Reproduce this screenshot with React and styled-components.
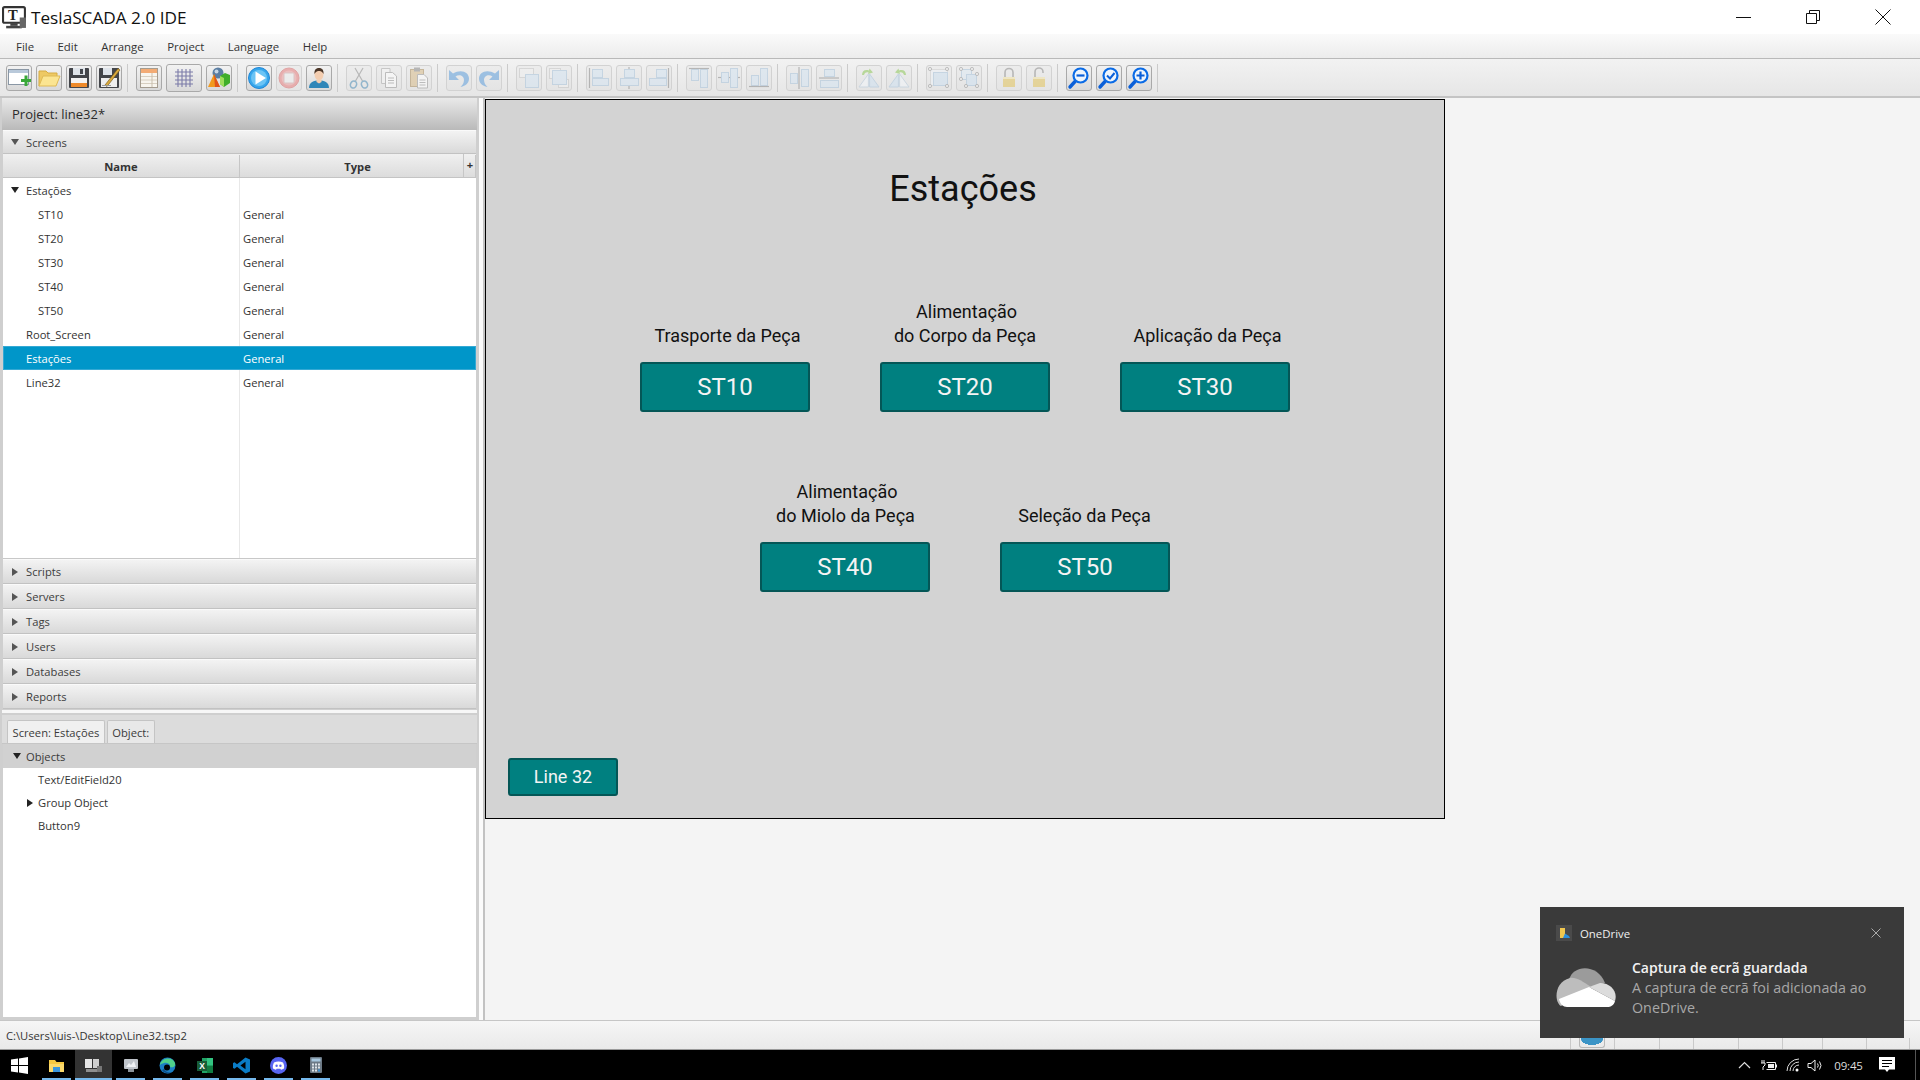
import React from "react";
import styled, { createGlobalStyle } from "styled-components";

const UI_FONT = `"Open Sans", "Noto Sans", sans-serif`;

const GlobalStyle = createGlobalStyle`
  html, body { margin: 0; padding: 0; background: #f4f4f4; }
  * { box-sizing: border-box; }
  body { font-family: ${UI_FONT}; font-size: 11.2px; color: #333; }
`;

const Page = styled.div`
  position: relative;
  width: 1920px;
  height: 1080px;
  overflow: hidden;
  display: flex;
  flex-direction: column;
`;

/* window chrome */
const TitleBar = styled.div`
  height: 34px;
  background: #fff;
  display: flex;
  align-items: center;
  padding: 0 2px;
  flex: none;
`;
const AppTitle = styled.div`
  margin-left: 4px;
  font-size: 17.2px;
  color: #111;
  flex: 1;
`;
const WinButton = styled.div`
  width: 70px;
  height: 34px;
  display: flex;
  align-items: center;
  justify-content: center;
`;
const MenuBar = styled.div`
  height: 24px;
  flex: none;
  display: flex;
  align-items: center;
  padding-left: 16px;
  gap: 23.5px;
  background: linear-gradient(#fafafa, #ececec);
  color: #333;
  font-size: 11.4px;
`;
const Toolbar = styled.div`
  height: 40px;
  flex: none;
  display: flex;
  align-items: center;
  padding: 0 0 0 6px;
  gap: 4px;
  background: linear-gradient(#f2f2f2, #e6e6e6);
  border-top: 1px solid #b9b9b9;
  border-bottom: 2px solid #c4c4c4;
`;
const ToolButton = styled.div`
  width: ${(p) => (p.$wide ? 36 : 26)}px;
  height: ${(p) => (p.$wide ? 28 : 26)}px;
  flex: none;
  border-radius: 3px;
  border: 1px solid ${(p) => (p.$off ? "#d2d2d2" : "#a9a9a9")};
  background: ${(p) => (p.$off ? "linear-gradient(#ececec, #e4e4e4)" : "linear-gradient(#f2f2f2, #d9d9d9)")};
  display: flex;
  align-items: center;
  justify-content: center;
  & > svg { opacity: ${(p) => (p.$off ? 0.55 : 1)}; }
`;
const ToolSep = styled.div`
  width: 1px;
  height: 28px;
  flex: none;
  background: #cbcbcb;
  margin: 0 4px 0 1px;
`;

/* main split */
const Main = styled.div`
  flex: 1;
  min-height: 0;
  display: flex;
  background: #f4f4f4;
`;
const Side = styled.div`
  width: 479px;
  flex: none;
  display: flex;
  flex-direction: column;
  background: #cfcfcf;
  padding: 0 3px 3px 3px;
`;
const Gutter = styled.div`
  width: 6px;
  flex: none;
  background: #fbfbfb;
  border-right: 2px solid #c2c2c2;
`;
const ProjectHeader = styled.div`
  height: 32px;
  flex: none;
  margin: 0 -1px;
  padding-left: 10px;
  display: flex;
  align-items: center;
  font-size: 13px;
  color: #2b2b2b;
  background: linear-gradient(#e9e9e9, #b9b9b9);
`;
const PaneTitle = styled.div`
  height: ${(p) => (p.$h ? p.$h : 25)}px;
  flex: none;
  display: flex;
  align-items: center;
  padding-left: 9px;
  gap: 8px;
  color: #3c3c3c;
  background: linear-gradient(#f3f3f3, #d9d9d9);
  border-top: 1px solid #fafafa;
  border-bottom: 1px solid #c2c2c2;
`;
const Arrow = styled.span`
  width: 0;
  height: 0;
  flex: none;
  display: inline-block;
  ${(p) =>
    p.$open
      ? `margin: 0 -1px; border-left: 4.5px solid transparent; border-right: 4.5px solid transparent; border-top: 6px solid ${p.$dark ? "#222" : "#555"};`
      : `border-top: 4.5px solid transparent; border-bottom: 4.5px solid transparent; border-left: 6px solid ${p.$dark ? "#222" : "#555"};`}
`;
const ColumnHeader = styled.div`
  position: relative;
  height: 24px;
  flex: none;
  display: grid;
  grid-template-columns: 237px 1fr;
  padding-top: 1px;
  font-weight: 700;
  color: #333;
  background: linear-gradient(#f0f0f0, #dcdcdc);
  border-bottom: 1px solid #c4c4c4;
`;
const HeaderCell = styled.div`
  display: flex;
  align-items: center;
  justify-content: center;
  border-right: 1px solid #c6c6c6;
  &:last-child { border-right: 0; }
`;
const HeaderPlus = styled.div`
  position: absolute;
  right: 0;
  top: 0;
  bottom: 0;
  width: 13px;
  display: flex;
  align-items: center;
  justify-content: center;
  border-left: 1px solid #c6c6c6;
  padding-bottom: 2px;
`;
const TreeTable = styled.div`
  height: 381px;
  flex: none;
  background: linear-gradient(to right, #fff 236px, #e8e8e8 236px, #e8e8e8 237px, #fff 237px);
  border-bottom: 1px solid #c8c8c8;
`;
const TreeRow = styled.div`
  height: 24px;
  display: grid;
  grid-template-columns: 236px 1fr;
  align-items: center;
  color: ${(p) => (p.$selected ? "#fff" : "#333")};
  background: ${(p) => (p.$selected ? "#0096c9" : "transparent")};
  ${(p) => p.$selected && "box-shadow: inset 0 0 0 1px #35a9d4;"}
`;
const NameCell = styled.div`
  display: flex;
  align-items: center;
  padding-left: ${(p) => p.$indent}px;
  gap: 8px;
`;
const TypeCell = styled.div`
  padding-left: 4px;
`;
const SplitLine = styled.div`
  height: 6px;
  flex: none;
  margin: 0 -1px;
  background: linear-gradient(#cfcfcf 0 1px, #f7f7f7 1px 4px, #cfcfcf 4px);
`;
const TabStrip = styled.div`
  height: 29px;
  flex: none;
  display: flex;
  align-items: flex-end;
  gap: 2px;
  padding-left: 5px;
  margin: 0 -1px;
  background: #dcdcdc;
  border-bottom: 1px solid #c6c6c6;
`;
const Tab = styled.div`
  height: 23px;
  padding: 0 4.5px;
  display: flex;
  align-items: center;
  border: 1px solid #c4c4c4;
  border-bottom: 0;
  border-radius: 2px 2px 0 0;
  background: ${(p) => (p.$active ? "#f0f0f0" : "#e8e8e8")};
  color: #3a3a3a;
`;
const ObjectsHeader = styled.div`
  height: 24px;
  flex: none;
  display: flex;
  align-items: center;
  gap: 6px;
  padding-left: 11px;
  color: #3a3a3a;
  background: #d1d1d1;
`;
const ObjectList = styled.div`
  flex: 1;
  background: #fff;
`;
const ObjectRow = styled.div`
  height: 23px;
  display: flex;
  align-items: center;
  padding-left: ${(p) => (p.$branch ? 24 : 35)}px;
  gap: 5px;
`;

/* drawing area */
const Workspace = styled.div`
  flex: 1;
  min-width: 0;
  padding-top: 1px;
`;
const Canvas = styled.div`
  position: relative;
  width: 960px;
  height: 720px;
  border: 1px solid #000;
  background: #d3d3d3;
  font-family: Roboto, sans-serif;
  color: #111;
`;
const ScreenTitle = styled.div`
  position: absolute;
  left: 477px;
  top: 67px;
  transform: translateX(-50%);
  font-size: 36px;
  line-height: 44px;
  white-space: nowrap;
  color: #111;
`;
const Caption = styled.div`
  position: absolute;
  left: ${(p) => p.$x}px;
  top: ${(p) => p.$y}px;
  transform: translateX(-50%);
  text-align: center;
  font-size: 18px;
  line-height: 24px;
  white-space: nowrap;
  & > div:nth-child(2) { padding-right: 3px; }
`;
const StationButton = styled.div`
  position: absolute;
  left: ${(p) => p.$x}px;
  top: ${(p) => p.$y}px;
  width: ${(p) => p.$w}px;
  height: ${(p) => p.$h}px;
  padding-bottom: ${(p) => p.$lift || 0}px;
  display: flex;
  align-items: center;
  justify-content: center;
  background: #008080;
  color: #f4f4f4;
  border: 2px solid #045656;
  border-radius: 3px;
  font-size: ${(p) => p.$fs}px;
`;

/* status bar */
const StatusBar = styled.div`
  height: 30px;
  flex: none;
  display: flex;
  align-items: center;
  padding-left: 6px;
  background: linear-gradient(#f6f6f6, #e9e9e9);
  border-top: 1px solid #c6c6c6;
  color: #333;
  border-bottom: 1px solid #9a9a9a;
`;
const StatusPath = styled.div`
  flex: 1;
`;
const StatusCells = styled.div`
  display: flex;
  height: 100%;
  align-items: flex-end;
  padding-right: 10px;
`;
const StatusCell = styled.div`
  width: ${(p) => p.$w}px;
  height: 11px;
  border-left: 1px solid #c9c9c9;
`;
const StatusUser = styled.div`
  width: 26px;
  height: 11px;
  margin: 0 9px 1px 0;
  border: 1px solid #b9b9b9;
  border-top: 0;
  border-radius: 0 0 3px 3px;
  background: radial-gradient(ellipse 11px 6px at 50% 2px, #3b94c6 98%, transparent);
`;

/* taskbar */
const Taskbar = styled.div`
  height: 30px;
  flex: none;
  display: flex;
  align-items: center;
  background: #000;
  color: #e6e6e6;
`;
const StartSlot = styled.div`
  width: 38px;
  height: 30px;
  display: flex;
  align-items: center;
  justify-content: center;
`;
const TaskSlot = styled.div`
  position: relative;
  width: 37px;
  height: 30px;
  flex: none;
  display: flex;
  align-items: center;
  justify-content: center;
  background: ${(p) => (p.$active ? "#333" : "transparent")};
  &::after {
    content: "";
    position: absolute;
    bottom: 0;
    left: ${(p) => (p.$active ? 0 : 4)}px;
    right: ${(p) => (p.$active ? 0 : 4)}px;
    height: 2px;
    background: #76b9ed;
  }
`;
const Tray = styled.div`
  margin-left: auto;
  display: flex;
  align-items: center;
  height: 30px;
`;
const TrayIcon = styled.div`
  width: ${(p) => p.$w}px;
  display: flex;
  align-items: center;
  justify-content: center;
`;
const Clock = styled.div`
  width: 47px;
  text-align: center;
  font-size: 11.5px;
  letter-spacing: -0.2px;
  color: #ddd;
`;
const ShowDesktop = styled.div`
  width: 1px;
  height: 30px;
  margin: 0 4px 0 13px;
  background: #555;
`;

/* toast */
const Toast = styled.div`
  position: absolute;
  left: 1540px;
  top: 907px;
  width: 364px;
  height: 131px;
  padding: 18px 16px 0 16px;
  background: #3a3a3a;
  color: #fff;
`;
const ToastHead = styled.div`
  display: flex;
  align-items: center;
  height: 16px;
  font-size: 11.4px;
  gap: 8px;
  color: #f0f0f0;
`;
const ToastClose = styled.div`
  margin-left: auto;
  margin-right: 7px;
  display: flex;
`;
const ToastBody = styled.div`
  display: flex;
  gap: 16px;
  margin-top: 17px;
`;
const ToastCloud = styled.div`
  padding-top: 10px;
  flex: none;
`;
const ToastTitle = styled.div`
  font-size: 14px;
  line-height: 20px;
  font-weight: 600;
  color: #f2f2f2;
`;
const ToastText = styled.div`
  font-size: 14.3px;
  line-height: 20px;
  color: #a8a8a8;
  width: 250px;
`;

/* icons */
const Svg = ({ w = 24, h = 24, vb, children }) => (
  <svg width={w} height={h} viewBox={vb || `0 0 ${w} ${h}`}>
    {children}
  </svg>
);

const BLUE = { fill: "#d5e5f3", stroke: "#a9c4dc" };
const PALE = { fill: "#f1f1f1", stroke: "#c6c6c6" };
const Box = ({ b, k = BLUE }) => <rect x={b[0] + 0.5} y={b[1] + 0.5} width={b[2] - b[0]} height={b[3] - b[1]} fill={k.fill} stroke={k.stroke} />;
const Rule = ({ d }) => <path d={d} stroke="#8a8a8a" strokeWidth="1.2" fill="none" />;

const Boxes = ({ back, front, rule }) => (
  <Svg>
    <g transform="translate(-1 -1)">
      {back && <Box b={back} k={PALE} />}
      <Box b={front} />
      {rule && <Rule d={rule} />}
    </g>
  </Svg>
);

const Dots = ({ pts }) =>
  pts.map(([x, y]) => <circle key={`${x}-${y}`} cx={x} cy={y} r="1.6" fill="#eee" stroke="#888" strokeWidth="0.8" />);

const Magnifier = ({ children }) => (
  <Svg>
    <path d="M8 15.5 L3 21" stroke="#0a5fd8" strokeWidth="3.4" strokeLinecap="round" />
    <circle cx="13.5" cy="9.5" r="7" fill="#eef5fc" stroke="#0a6be6" strokeWidth="2.2" />
    {children}
  </Svg>
);

const Lock = ({ open }) => (
  <Svg>
    <path d={open ? "M8 11 V6 a4 4 0 0 1 8 0 M16 6 v1" : "M8 11 V6.5 a4 4 0 0 1 8 0 V11"} stroke="#8e8e8e" strokeWidth="1.6" fill="none" />
    <rect x="6" y="11" width="12" height="10" fill="#e3c45c" />
    <rect x="6" y="11" width="12" height="2" fill="#f4e5a8" />
  </Svg>
);

const Flip = ({ mirror }) => (
  <Svg>
    <g transform={mirror ? "translate(24 0) scale(-1 1)" : undefined}>
      <path d="M11.4 8 V21 H2 Z" fill="#f3f7fb" stroke="#b6cadc" />
      <path d="M12.6 8 V21 H22 Z" fill="#cfe1f1" stroke="#a9c4dc" />
      <path d="M5 9 C5 5 8 3 12 4.5 L12.5 2.5 L16 6.5 L11 8 L11.6 6.4 C9 5.6 7.5 7 7 9 Z" fill="#8fc95a" />
    </g>
  </Svg>
);

const ICONS = {
  add: (
    <Svg>
      <rect x="1.5" y="3.5" width="20" height="15" fill="#fff" stroke="#8a97a5" />
      <rect x="2" y="4" width="19" height="3" fill="#b9c9da" />
      <path d="M14 13h3.5V9.5h3V13H24v3h-3.5v4h-3v-4H14z" fill="#38a838" />
    </Svg>
  ),
  open: (
    <Svg>
      <path d="M2 20 V5 h7 l2 2 h9 v4 z" fill="#eec964" stroke="#d6ac43" />
      <path d="M2 20 L6 10 H23 L19 20 Z" fill="#fbe592" stroke="#dfba55" />
    </Svg>
  ),
  save: (
    <Svg>
      <rect x="2" y="2" width="20" height="20" rx="1" fill="#43454a" />
      <rect x="6" y="2" width="12" height="7" fill="#dfe4ea" />
      <rect x="13" y="3" width="3" height="5" fill="#44474d" />
      <rect x="4" y="12" width="16" height="5" fill="#f3f3f3" />
      <rect x="4" y="17" width="16" height="4" fill="#ee8a2a" />
    </Svg>
  ),
  saveAs: (
    <Svg>
      <rect x="2" y="2" width="20" height="20" rx="1" fill="#43454a" />
      <rect x="6" y="2" width="9" height="7" fill="#dfe4ea" />
      <rect x="4" y="12" width="16" height="9" fill="#eeeeee" />
      <path d="M8 19 L21 2.5 L23 4 L10 20.5 Z" fill="#d9a93c" stroke="#6d5317" strokeWidth="0.6" />
      <path d="M5 19.5 H14" stroke="#999" />
    </Svg>
  ),
  table: (
    <Svg>
      <rect x="3.5" y="2.5" width="17" height="19" fill="#f8f5ee" stroke="#a59c8f" />
      <rect x="4" y="3" width="16" height="4" fill="#f3ab74" />
      <path d="M4 10.5 H20 M4 14 H20 M4 17.5 H20" stroke="#d8cfc0" />
      <path d="M15 7 V21" stroke="#c9bfae" />
    </Svg>
  ),
  grid: (
    <Svg>
      <path d="M6 3 V21 M10 3 V21 M14 3 V21 M18 3 V21 M3 6 H21 M3 10 H21 M3 14 H21 M3 18 H21" stroke="#7b7ba8" strokeWidth="1.1" />
    </Svg>
  ),
  shapes: (
    <Svg>
      <circle cx="11" cy="7" r="5.5" fill="#5b7ea3" />
      <circle cx="9.5" cy="5.5" r="2" fill="#c6d6e6" />
      <path d="M7 8 L13 21 H1 Z" fill="#f29a1e" />
      <path d="M7 8 L13 21 H8 Z" fill="#e0541a" />
      <path d="M13 10 L18 7 L23 9 V17 L17 21 L13 18 Z" fill="#3fae2a" />
      <path d="M13 10 L17 12 V21 L13 18 Z" fill="#9ede5c" />
    </Svg>
  ),
  play: (
    <Svg>
      <circle cx="12" cy="12" r="10.5" fill="#36a6ec" stroke="#1f86d6" />
      <circle cx="12" cy="12" r="8" fill="#6cc4f5" />
      <path d="M8.5 5.5 L19 12 L8.5 18.5 Z" fill="#fff" />
    </Svg>
  ),
  stop: (
    <Svg>
      <circle cx="12" cy="12" r="10" fill="#e77f7f" stroke="#d96c6c" />
      <circle cx="12" cy="12" r="7.5" fill="#ef9d9d" />
      <rect x="7" y="7" width="10" height="10" rx="1" fill="#efefef" stroke="#cfa9a9" />
    </Svg>
  ),
  user: (
    <Svg>
      <path d="M2 22 C2 16 7 14.5 12 14.5 S22 16 22 22 Z" fill="#2f86b8" />
      <path d="M9.5 13.5 h5 v2.5 l-2.5 1.5 l-2.5 -1.5z" fill="#f3cdb0" />
      <ellipse cx="12" cy="8.5" rx="4.5" ry="5.5" fill="#f3cdb0" />
      <path d="M7.5 8 C7 3.5 9.5 2 12 2 s5 1.5 4.5 6 C15.5 5.5 13 5 12 5 S8.5 5.5 7.5 8 Z" fill="#4a3527" />
    </Svg>
  ),
  cut: (
    <Svg>
      <path d="M8 2 L15.5 15 M16 2 L8.5 15" stroke="#8f8f8f" strokeWidth="1.2" />
      <ellipse cx="6.5" cy="18.5" rx="3" ry="3.6" fill="none" stroke="#4f8fb8" strokeWidth="1.6" transform="rotate(25 6.5 18.5)" />
      <ellipse cx="17.5" cy="18.5" rx="3" ry="3.6" fill="none" stroke="#4f8fb8" strokeWidth="1.6" transform="rotate(-25 17.5 18.5)" />
    </Svg>
  ),
  copy: (
    <Svg>
      <path d="M4.5 2.5 H13 V17.5 H4.5 Z" fill="#f6f6f6" stroke="#aaa" />
      <path d="M8.5 6.5 H15.5 L19.5 10 V21.5 H8.5 Z" fill="#fff" stroke="#999" />
      <path d="M11 12 H17 M11 14.5 H17 M11 17 H17" stroke="#999" />
    </Svg>
  ),
  paste: (
    <Svg>
      <rect x="3.5" y="3.5" width="13" height="17" fill="#d9bd8c" stroke="#a98d5d" />
      <rect x="7" y="1.5" width="6" height="4" fill="#8b8b8b" />
      <path d="M10.5 8.5 H17 L20.5 12 V22 H10.5 Z" fill="#fff" stroke="#999" />
      <path d="M12.5 14 H18.5 M12.5 16.5 H18.5 M12.5 19 H18.5" stroke="#999" />
    </Svg>
  ),
  undo: (
    <Svg>
      <path d="M2 4 V14 H12 L8.5 10.5 C12 8 17 9.5 17 14 C17 17 15.5 19 13.5 21 C19 20 22 16.5 22 12.5 C22 6 14 2.5 6 7.5 Z" fill="#5f9fdc" />
    </Svg>
  ),
  redo: (
    <Svg>
      <g transform="translate(24 0) scale(-1 1)">
        <path d="M2 4 V14 H12 L8.5 10.5 C12 8 17 9.5 17 14 C17 17 15.5 19 13.5 21 C19 20 22 16.5 22 12.5 C22 6 14 2.5 6 7.5 Z" fill="#5f9fdc" />
      </g>
    </Svg>
  ),
  front: <Boxes back={[3, 3, 17, 12]} front={[9, 9, 22, 22]} />,
  back: (
    <Svg>
      <g transform="translate(-1 -1)">
        <Box b={[3, 3, 14, 13]} k={PALE} />
        <Box b={[12, 14, 22, 22]} k={PALE} />
        <Box b={[6, 5, 20, 19]} />
      </g>
    </Svg>
  ),
  alignLeft: (
    <Svg>
      <g transform="translate(-1 -1)">
        <Box b={[6, 4, 16, 12]} />
        <Box b={[6, 13, 22, 20]} />
        <Rule d="M3.5 3 V23" />
      </g>
    </Svg>
  ),
  alignCenter: (
    <Svg>
      <g transform="translate(-1 -1)">
        <Rule d="M13 2 V24" />
        <Box b={[8, 4, 18, 12]} />
        <Box b={[4, 13, 22, 20]} />
      </g>
    </Svg>
  ),
  alignRight: (
    <Svg>
      <g transform="translate(-1 -1)">
        <Box b={[10, 4, 20, 12]} />
        <Box b={[3, 13, 20, 20]} />
        <Rule d="M22.5 3 V23" />
      </g>
    </Svg>
  ),
  alignTop: (
    <Svg>
      <g transform="translate(-1 -1)">
        <Box b={[5, 4, 12, 15]} />
        <Box b={[14, 4, 21, 22]} />
        <Rule d="M3 3.5 H23" />
      </g>
    </Svg>
  ),
  alignMiddle: (
    <Svg>
      <g transform="translate(-1 -1)">
        <Rule d="M2 12.5 H24" />
        <Box b={[5, 7, 12, 17]} />
        <Box b={[14, 3, 21, 22]} />
      </g>
    </Svg>
  ),
  alignBottom: (
    <Svg>
      <g transform="translate(-1 -1)">
        <Box b={[5, 10, 12, 20]} />
        <Box b={[14, 3, 21, 20]} />
        <Rule d="M3 21.5 H23" />
      </g>
    </Svg>
  ),
  distH: (
    <Svg>
      <g transform="translate(-1 -1)">
        <Box b={[4, 8, 11, 18]} />
        <Rule d="M13 2 V24" />
        <Box b={[15, 4, 22, 21]} />
      </g>
    </Svg>
  ),
  distV: (
    <Svg>
      <g transform="translate(-1 -1)">
        <Box b={[8, 4, 18, 11]} />
        <Rule d="M3 13 H23" />
        <Box b={[4, 15, 22, 22]} />
      </g>
    </Svg>
  ),
  flipA: <Flip />,
  flipB: <Flip mirror />,
  group: (
    <Svg>
      <rect x="3.5" y="3.5" width="17" height="16" fill="#eef3f8" stroke="#cfcfcf" />
      <rect x="6.5" y="6.5" width="14" height="13" fill="#cfe1f1" stroke="#a9c4dc" />
      <Dots pts={[[3, 3], [20, 3], [3, 20], [20, 20]]} />
    </Svg>
  ),
  ungroup: (
    <Svg>
      <rect x="4.5" y="3.5" width="10" height="10" fill="#dfeaf4" stroke="#a9c4dc" />
      <rect x="9.5" y="8.5" width="10" height="11" fill="#cfe1f1" stroke="#a9c4dc" />
      <Dots pts={[[4, 3], [15, 3], [4, 13], [9, 20], [20, 8], [20, 20]]} />
    </Svg>
  ),
  lock: <Lock />,
  unlock: <Lock open />,
  zoomOut: (
    <Magnifier>
      <path d="M9.5 9.5 H17.5" stroke="#0a5fd8" strokeWidth="2.2" />
    </Magnifier>
  ),
  zoomFit: (
    <Magnifier>
      <path d="M10 9.5 L13 12.5 L17.5 7" stroke="#0a5fd8" strokeWidth="2" fill="none" />
    </Magnifier>
  ),
  zoomIn: (
    <Magnifier>
      <path d="M9.5 9.5 H17.5 M13.5 5.5 V13.5" stroke="#0a5fd8" strokeWidth="2.2" />
    </Magnifier>
  ),
};

const TOOL_GROUPS = [
  [["add"], ["open"], ["save"], ["saveAs"]],
  [["table"], ["grid", "wide"], ["shapes"]],
  [["play"], ["stop", "off"], ["user"]],
  [["cut", "off"], ["copy", "off"], ["paste", "off"]],
  [["undo", "off"], ["redo", "off"]],
  [["front", "off"], ["back", "off"]],
  [["alignLeft", "off"], ["alignCenter", "off"], ["alignRight", "off"]],
  [["alignTop", "off"], ["alignMiddle", "off"], ["alignBottom", "off"]],
  [["distH", "off"], ["distV", "off"]],
  [["flipA", "off"], ["flipB", "off"]],
  [["group", "off"], ["ungroup", "off"]],
  [["lock", "off"], ["unlock", "off"]],
  [["zoomOut"], ["zoomFit"], ["zoomIn"]],
];

const AppLogo = () => (
  <Svg w={25} h={23} vb="0 0 24 22">
    <rect x="1" y="1" width="21" height="15" rx="1.5" fill="#fff" stroke="#333" strokeWidth="2" />
    <text x="10.5" y="13" fontFamily="Liberation Serif, serif" fontWeight="700" fontSize="14" textAnchor="middle" fill="#222">T</text>
    <rect x="8" y="16" width="7" height="3" fill="#444" />
    <rect x="4" y="19" width="15" height="2.4" fill="#444" />
    <rect x="17" y="11" width="6" height="10" fill="#666" />
  </Svg>
);

const WinLogo = () => (
  <Svg w={17} h={17}>
    <path d="M0 2.5 L7 1.5 V8 H0 Z M8 1.4 L17 0 V8 H8 Z M0 9 H7 V15.5 L0 14.5 Z M8 9 H17 V17 L8 15.6 Z" fill="#fff" />
  </Svg>
);

const TASK_ICONS = [
  <Svg w={15} h={15} key="files">
    <path d="M0 2 H6 L7.5 4 H15 V14 H0 Z" fill="#f5c842" />
    <rect x="0" y="6" width="15" height="8" fill="#fbd96b" />
    <rect x="4" y="9" width="7" height="5" fill="#3a96dd" />
  </Svg>,
  <Svg w={17} h={15} key="tesla">
    <rect x="0" y="1" width="7" height="9" fill="#e6e6e6" />
    <rect x="8" y="1" width="6" height="9" fill="#cfcfcf" />
    <rect x="1" y="11" width="12" height="3" fill="#8f8f8f" />
    <rect x="12" y="8" width="5" height="6" fill="#777" />
  </Svg>,
  <Svg w={16} h={15} key="app">
    <rect x="1" y="1" width="14" height="10" rx="1" fill="#bfc4ca" />
    <path d="M3 9 L6 5 L8 7 L11 3 L13 9 Z" fill="#eef1f4" />
    <rect x="5" y="11" width="6" height="3" fill="#8d949b" />
  </Svg>,
  <Svg w={17} h={17} key="edge">
    <circle cx="8.5" cy="8.5" r="8" fill="#1b7fc4" />
    <path d="M1 7 C3 1 13 -1 16 6 C17 9 14 11 11 10 C12 7 8 5 5 6 C3 6.5 2 7 1 8 Z" fill="#4fd08a" />
    <path d="M5 12 C6 15 10 16 13 15 C11 17 5 17 3 13 Z" fill="#0b4f8a" />
    <circle cx="8" cy="10.5" r="3" fill="#000" />
  </Svg>,
  <Svg w={16} h={15} key="excel">
    <rect x="5" y="0" width="11" height="15" fill="#21a366" />
    <rect x="10" y="0" width="6" height="7" fill="#33c481" />
    <rect x="10" y="8" width="6" height="7" fill="#107c41" />
    <rect x="0" y="3" width="10" height="10" fill="#185c37" />
    <text x="5" y="11" fontSize="8.5" fontWeight="700" textAnchor="middle" fill="#fff" fontFamily="Liberation Sans, sans-serif">X</text>
  </Svg>,
  <Svg w={17} h={17} key="code">
    <path d="M12.5 0.5 L17 2.5 V14.5 L12.5 16.5 L4 9.8 L1.6 11.8 L0 11 V6 L1.6 5.2 L4 7.2 Z M12.5 4.8 L7.4 8.5 L12.5 12.2 Z" fill="#0a7cc6" />
  </Svg>,
  <Svg w={17} h={17} key="discord">
    <circle cx="8.5" cy="8.5" r="8.5" fill="#5865f2" />
    <path d="M4 5.5 C7 4 10 4 13 5.5 C14 7.5 14.5 9.5 14 11.5 C13 12.2 12 12.6 11 12.8 L10.4 11.8 H6.6 L6 12.8 C5 12.6 4 12.2 3 11.5 C2.6 9.5 3 7.5 4 5.5 Z" fill="#fff" />
    <circle cx="6.6" cy="8.8" r="1.2" fill="#5865f2" />
    <circle cx="10.4" cy="8.8" r="1.2" fill="#5865f2" />
  </Svg>,
  <Svg w={12} h={16} key="calc">
    <rect width="12" height="16" rx="1" fill="#6d7a86" />
    <rect x="1.5" y="1.5" width="9" height="3" fill="#a8c7de" />
    <path d="M2 6.5h2v2H2zM5 6.5h2v2H5zM8 6.5h2v2H8zM2 9.5h2v2H2zM5 9.5h2v2H5zM8 9.5h2v2H8zM2 12.5h2v2H2zM5 12.5h2v2H5z" fill="#dfe5ea" />
    <rect x="8" y="12.5" width="2" height="2" fill="#3a96dd" />
  </Svg>,
];

const SCREEN_ROWS = [
  { name: "Estações", indent: 9, open: true, type: "" },
  { name: "ST10", indent: 35, type: "General" },
  { name: "ST20", indent: 35, type: "General" },
  { name: "ST30", indent: 35, type: "General" },
  { name: "ST40", indent: 35, type: "General" },
  { name: "ST50", indent: 35, type: "General" },
  { name: "Root_Screen", indent: 23, type: "General" },
  { name: "Estações", indent: 23, type: "General", selected: true },
  { name: "Line32", indent: 23, type: "General" },
];

const CAPTIONS = [
  { x: 241.5, y: 224, lines: ["Trasporte da Peça"] },
  { x: 480.5, y: 200, lines: ["Alimentação", "do Corpo da Peça"] },
  { x: 721.5, y: 224, lines: ["Aplicação da Peça"] },
  { x: 361, y: 380, lines: ["Alimentação", "do Miolo da Peça"] },
  { x: 598.5, y: 404, lines: ["Seleção da Peça"] },
];

const STATIONS = [
  { label: "ST10", x: 154, y: 262 },
  { label: "ST20", x: 394, y: 262 },
  { label: "ST30", x: 634, y: 262 },
  { label: "ST40", x: 274, y: 442 },
  { label: "ST50", x: 514, y: 442 },
];

const CLOSED_PANES = ["Scripts", "Servers", "Tags", "Users", "Databases", "Reports"];
const MENUS = ["File", "Edit", "Arrange", "Project", "Language", "Help"];

export default function App() {
  return (
    <Page>
      <GlobalStyle />
      <TitleBar>
        <AppLogo />
        <AppTitle>TeslaSCADA 2.0 IDE</AppTitle>
        <WinButton>
          <Svg w={16} h={16}><path d="M1 8.5 H16" stroke="#111" /></Svg>
        </WinButton>
        <WinButton>
          <Svg w={16} h={16}><path d="M1.5 4.5 H11.5 V14.5 H1.5 Z M4.5 4 V1.5 H14.5 V11.5 H12" stroke="#111" fill="none" /></Svg>
        </WinButton>
        <WinButton>
          <Svg w={16} h={16}><path d="M0.5 0.5 L15.5 15.5 M15.5 0.5 L0.5 15.5" stroke="#111" /></Svg>
        </WinButton>
      </TitleBar>
      <MenuBar>
        {MENUS.map((m) => <span key={m}>{m}</span>)}
      </MenuBar>
      <Toolbar>
        {TOOL_GROUPS.map((group, i) => (
          <React.Fragment key={i}>
            {group.map(([name, mode]) => (
              <ToolButton key={name} $off={mode === "off"} $wide={mode === "wide"}>
                {ICONS[name]}
              </ToolButton>
            ))}
            <ToolSep />
          </React.Fragment>
        ))}
      </Toolbar>
      <Main>
        <Side>
          <ProjectHeader>Project: line32*</ProjectHeader>
          <PaneTitle $h={24}><Arrow $open />Screens</PaneTitle>
          <ColumnHeader>
            <HeaderCell>Name</HeaderCell>
            <HeaderCell>Type</HeaderCell>
            <HeaderPlus>+</HeaderPlus>
          </ColumnHeader>
          <TreeTable>
            {SCREEN_ROWS.map((r, i) => (
              <TreeRow key={i} $selected={r.selected}>
                <NameCell $indent={r.indent}>
                  {r.open && <Arrow $open $dark />}
                  {r.name}
                </NameCell>
                <TypeCell>{r.type}</TypeCell>
              </TreeRow>
            ))}
          </TreeTable>
          {CLOSED_PANES.map((p) => (
            <PaneTitle key={p}><Arrow />{p}</PaneTitle>
          ))}
          <SplitLine />
          <TabStrip>
            <Tab $active>Screen: Estações</Tab>
            <Tab>Object:</Tab>
          </TabStrip>
          <ObjectsHeader><Arrow $open $dark />Objects</ObjectsHeader>
          <ObjectList>
            <ObjectRow>Text/EditField20</ObjectRow>
            <ObjectRow $branch><Arrow $dark />Group Object</ObjectRow>
            <ObjectRow>Button9</ObjectRow>
          </ObjectList>
        </Side>
        <Gutter />
        <Workspace>
          <Canvas>
            <ScreenTitle>Estações</ScreenTitle>
            {CAPTIONS.map((c) => (
              <Caption key={c.lines.join()} $x={c.x} $y={c.y}>
                {c.lines.map((l) => <div key={l}>{l}</div>)}
              </Caption>
            ))}
            {STATIONS.map((s) => (
              <StationButton key={s.label} $x={s.x} $y={s.y} $w={170} $h={50} $fs={24}>{s.label}</StationButton>
            ))}
            <StationButton $x={22} $y={658} $w={110} $h={38} $fs={18} $lift={2}>Line 32</StationButton>
          </Canvas>
        </Workspace>
      </Main>
      <StatusBar>
        <StatusPath>C:\Users\luis-\Desktop\Line32.tsp2</StatusPath>
        <StatusCells>
          <StatusCell $w={9} />
          <StatusUser />
          <StatusCell $w={45} />
          <StatusCell $w={34} />
          <StatusCell $w={45} />
          <StatusCell $w={44} />
          <StatusCell $w={40} />
          <StatusCell $w={44} />
          <StatusCell $w={43} />
          <StatusCell $w={1} />
        </StatusCells>
      </StatusBar>
      <Taskbar>
        <StartSlot><WinLogo /></StartSlot>
        {TASK_ICONS.map((icon, i) => (
          <TaskSlot key={i} $active={i === 1}>{icon}</TaskSlot>
        ))}
        <Tray>
          <TrayIcon $w={22}>
            <Svg w={13} h={8}><path d="M1 7 L6.5 1.5 L12 7" stroke="#ddd" strokeWidth="1.2" fill="none" /></Svg>
          </TrayIcon>
          <TrayIcon $w={26}>
            <Svg w={17} h={12}><path d="M4 1 V4 M2 1 V4 M1 4 H5 V6 L3 8 V11 M6.5 3.5 H15.5 V10.5 H6.5 M16.5 5.5 V8.5" stroke="#eee" fill="none" /><rect x="8" y="5" width="6" height="4" fill="#eee" /></Svg>
          </TrayIcon>
          <TrayIcon $w={24}>
            <Svg w={14} h={14}><path d="M1 13 A12 12 0 0 1 13 1 M4 13 A9 9 0 0 1 13 4 M7 13 A6 6 0 0 1 13 7" stroke="#ddd" fill="none" /><circle cx="11" cy="12" r="1.5" fill="#fff" /></Svg>
          </TrayIcon>
          <TrayIcon $w={20}>
            <Svg w={16} h={13}><path d="M1 4.5 H4 L8 1 V12 L4 8.5 H1 Z M10.5 4.5 Q12 6.5 10.5 8.5 M12.5 2.5 Q15.5 6.5 12.5 10.5" stroke="#eee" fill="none" /></Svg>
          </TrayIcon>
          <Clock>09:45</Clock>
          <TrayIcon $w={30}>
            <Svg w={16} h={16}><path d="M0 0 H16 V12.5 H10 L8 15 L6 12.5 H0 Z" fill="#fff" /><path d="M3 3.5 H13 M3 6.5 H13 M3 9.5 H10" stroke="#000" /></Svg>
          </TrayIcon>
          <ShowDesktop />
        </Tray>
      </Taskbar>
      <Toast>
        <ToastHead>
          <Svg w={16} h={16}>
            <rect width="16" height="16" fill="#4a4a4a" />
            <rect x="4" y="3" width="5" height="10" fill="#f0c74f" />
            <path d="M7 13 L9 8.5 L13 11 L14 13 Z" fill="#2a8fe0" />
          </Svg>
          OneDrive
          <ToastClose>
            <Svg w={10} h={10}><path d="M0.5 0.5 L9.5 9.5 M9.5 0.5 L0.5 9.5" stroke="#aaa" /></Svg>
          </ToastClose>
        </ToastHead>
        <ToastBody>
          <ToastCloud>
            <Svg w={60} h={40}>
              <path d="M13 12 C17 -4 42 -4 49 15 L30 20 Z" fill="#9b9b9b" />
              <path d="M5 38 C-2 34 -2 14 14 10 C20 9 26 13 35 19 L5 38 Z" fill="#bdbdbd" />
              <path d="M33 19 L44 15 C55 15 62 24 59 33 Z" fill="#dcdcdc" />
              <path d="M3 31 L33 19 L59 33 C58 37 55 39 51 39 H11 C7 39 4 36 3 31 Z" fill="#fff" />
            </Svg>
          </ToastCloud>
          <div>
            <ToastTitle>Captura de ecrã guardada</ToastTitle>
            <ToastText>A captura de ecrã foi adicionada ao OneDrive.</ToastText>
          </div>
        </ToastBody>
      </Toast>
    </Page>
  );
}
